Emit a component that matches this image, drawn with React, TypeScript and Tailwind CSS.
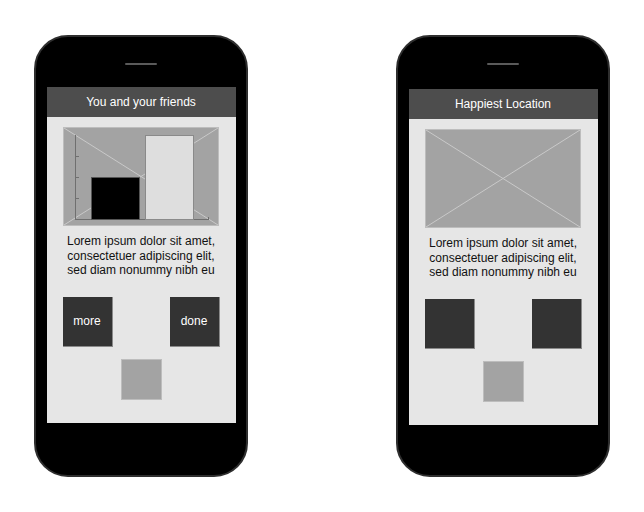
import React from 'react';

// 폰 와이어프레임 두 개 - 좌: 차트, 우: 이미지 자리표시

const font = { fontFamily: '"Liberation Sans", Arial, sans-serif' };

function Placeholder({ chart }: { chart?: boolean }) {
  return (
    <div className="w-[156px] h-[99px] bg-[#a3a3a3] border border-[#bdbdbd]">
      <svg width="154" height="97" viewBox="0 0 154 97" className="block">
        <line x1="0" y1="0" x2="154" y2="97" stroke="#c9c9c9" strokeWidth="1" />
        <line x1="154" y1="0" x2="0" y2="97" stroke="#c9c9c9" strokeWidth="1" />
        {chart && (
          <g>
            {/* 축 */}
            <line x1="11.5" y1="7" x2="11.5" y2="91.5" stroke="#6f6f6f" strokeWidth="1" />
            <line x1="11" y1="91.5" x2="144" y2="91.5" stroke="#6f6f6f" strokeWidth="1" />
            <line x1="11" y1="28.5" x2="15" y2="28.5" stroke="#6f6f6f" strokeWidth="1" />
            <line x1="11" y1="49.5" x2="15" y2="49.5" stroke="#6f6f6f" strokeWidth="1" />
            <line x1="11" y1="70.5" x2="15" y2="70.5" stroke="#6f6f6f" strokeWidth="1" />
            <line x1="144.5" y1="89" x2="144.5" y2="92" stroke="#6f6f6f" strokeWidth="1" />
            {/* 막대 */}
            <rect x="27.5" y="49.5" width="48" height="42" fill="#000" stroke="#555" strokeWidth="1" />
            <rect x="81.5" y="7.5" width="48" height="84" fill="#dedede" stroke="#8a8a8a" strokeWidth="1" />
          </g>
        )}
      </svg>
    </div>
  );
}

function Phone({ title, chart, buttons, shift }: { title: string; chart?: boolean; buttons?: string[]; shift?: boolean }) {
  return (
    <div className="w-[214px] h-[442px] rounded-[34px] bg-black border-2 border-[#2e2e2e] flex flex-col items-center">
      <div className="mt-[26px] w-[32px] h-[2px] rounded-full bg-[#5a5a5a]" />
      <div className={`${shift ? 'mt-[24px]' : 'mt-[22px]'} w-[189px] h-[336px] bg-[#e6e6e6] flex flex-col items-center`}>
        <div className="w-full h-[30px] bg-[#4d4d4d] flex items-center justify-center text-white text-[12px]">
          {title}
        </div>
        <div className="mt-[10px]">
          <Placeholder chart={chart} />
        </div>
        <p className="mt-[8px] text-center text-[12px] leading-[14.5px] text-[#111]">
          Lorem ipsum dolor sit amet,<br />
          consectetuer adipiscing elit,<br />
          sed diam nonummy nibh eu
        </p>
        <div className="mt-[19px] w-full px-[16px] flex justify-between">
          {[0, 1].map(i => (
            <div
              key={i}
              className="w-[50px] h-[50px] bg-[#333] border-r border-b border-[#8a8a8a] flex items-center justify-center text-white text-[12px]"
            >
              {buttons?.[i]}
            </div>
          ))}
        </div>
        <div className="mt-[12px] w-[41px] h-[41px] bg-[#a3a3a3] border border-[#bdbdbd]" />
      </div>
    </div>
  );
}

export default function App() {
  return (
    <div className="w-[644px] h-[512px] bg-white flex items-start pt-[35px] pl-[34px] gap-[148px]" style={font}>
      <Phone title="You and your friends" chart buttons={['more', 'done']} />
      <Phone title="Happiest Location" shift />
    </div>
  );
}
